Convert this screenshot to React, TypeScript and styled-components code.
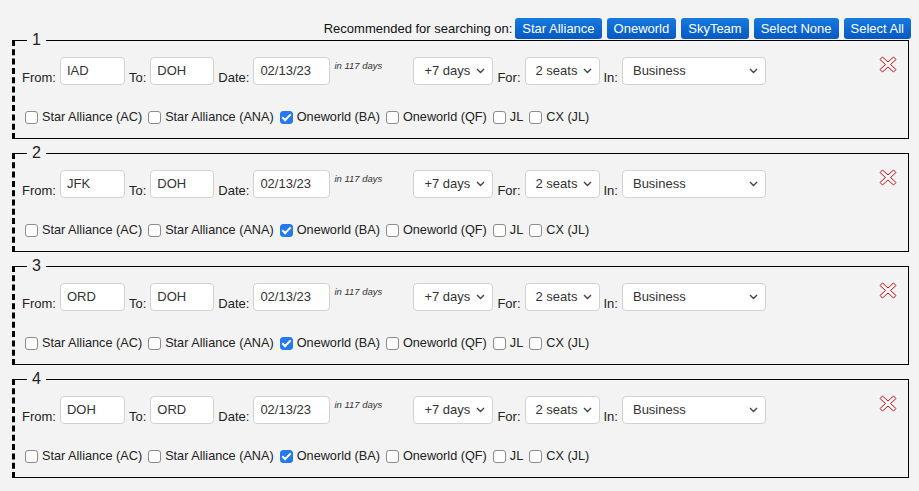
import React from 'react';
import styled, { createGlobalStyle } from 'styled-components';

const GlobalStyle = createGlobalStyle`
  body {
    margin: 8px;
    background: #f3f3f3;
    font-family: "Liberation Sans", Arial, sans-serif;
    font-size: 13px;
    color: #222;
  }
`;

const Toolbar = styled.div`
  display: flex;
  justify-content: flex-end;
  align-items: center;
  gap: 5px;
  margin-top: 10px;
  margin-bottom: -8px;
  height: 21px;
`;

const ToolbarText = styled.span`
  margin-right: -2px;
  font-size: 13px;
  color: #111;
`;

const PresetButton = styled.button`
  height: 21px;
  padding: 0 7px;
  border: none;
  border-radius: 3px;
  background: linear-gradient(#1679de, #0659c1);
  color: #fff;
  font-family: inherit;
  font-size: 13px;
  line-height: 21px;
  cursor: pointer;
`;

const Leg = styled.fieldset`
  margin: 0 2px 5px 4px;
  padding: 8px 11px 13px 7px;
  border: 1px solid #000;
  border-left: 3px dashed #000;
  background: transparent;
`;

const LegNumber = styled.legend`
  margin-left: 5px;
  padding: 0 5px;
  font-size: 16px;
  line-height: 18px;
  color: #222;
`;

const FieldRow = styled.div`
  display: flex;
  align-items: flex-end;
  gap: 4px;
  height: 28px;
`;

const FieldLabel = styled.span`
  line-height: 15px;
  font-size: 13px;
  color: #222;
`;

const TextBox = styled.input<{ $w: number }>`
  box-sizing: border-box;
  width: ${(p) => p.$w}px;
  height: 28px;
  margin: 0;
  padding: 0 6px 1px;
  border: 1px solid #d2d2d2;
  border-radius: 4px;
  background: #fff;
  font-family: inherit;
  font-size: 13px;
  color: #333;
  outline: none;
`;

const DaysNote = styled.span`
  align-self: flex-start;
  width: 75px;
  padding-top: 3px;
  font-size: 9.5px;
  font-style: italic;
  color: #333;
`;

const SelectWrap = styled.div<{ $w: number }>`
  position: relative;
  width: ${(p) => p.$w}px;
  height: 28px;
`;

const NativeSelect = styled.select`
  appearance: none;
  box-sizing: border-box;
  width: 100%;
  height: 28px;
  margin: 0;
  padding: 0 20px 1px 10px;
  border: 1px solid #d2d2d2;
  border-radius: 4px;
  background: #fff;
  font-family: inherit;
  font-size: 13px;
  color: #333;
  outline: none;
`;

const Chevron = styled.svg`
  position: absolute;
  right: 8px;
  top: 11px;
  pointer-events: none;
`;

const RemoveButton = styled.button`
  align-self: flex-start;
  margin: -1px 0 0 auto;
  padding: 0;
  border: none;
  background: none;
  cursor: pointer;
  line-height: 0;
`;

const CarrierRow = styled.div`
  display: flex;
  align-items: center;
  gap: 6px;
  margin-top: 24px;
  padding-left: 3px;
  line-height: 16px;
`;

const Carrier = styled.label`
  display: inline-flex;
  align-items: center;
  gap: 4px;
  font-size: 12.7px;
  color: #222;
`;

const Check = styled.input.attrs({ type: 'checkbox' })`
  appearance: none;
  position: relative;
  box-sizing: border-box;
  width: 13px;
  height: 13px;
  margin: 0;
  border: 1px solid #8c8c8c;
  border-radius: 3px;
  background: #fff;

  &:checked {
    background: #2479ee;
    border-color: #2479ee;
  }

  &:checked::after {
    content: '';
    position: absolute;
    left: 3.5px;
    top: 0.5px;
    width: 3px;
    height: 7px;
    border: solid #fff;
    border-width: 0 2px 2px 0;
    transform: rotate(45deg);
  }
`;

const legs = [
  { from: 'IAD', to: 'DOH' },
  { from: 'JFK', to: 'DOH' },
  { from: 'ORD', to: 'DOH' },
  { from: 'DOH', to: 'ORD' },
];

const carriers = [
  { name: 'Star Alliance (AC)', on: false },
  { name: 'Star Alliance (ANA)', on: false },
  { name: 'Oneworld (BA)', on: true },
  { name: 'Oneworld (QF)', on: false },
  { name: 'JL', on: false },
  { name: 'CX (JL)', on: false },
];

const presets = ['Star Alliance', 'Oneworld', 'SkyTeam', 'Select None', 'Select All'];

const Dropdown: React.FC<{ width: number; value: string; options: string[] }> = ({ width, value, options }) => (
  <SelectWrap $w={width}>
    <NativeSelect defaultValue={value}>
      {options.map((o) => (
        <option key={o}>{o}</option>
      ))}
    </NativeSelect>
    <Chevron width="9" height="6" viewBox="0 0 9 6">
      <polyline points="1,1 4.5,4.5 8,1" fill="none" stroke="#444" strokeWidth="1.4" />
    </Chevron>
  </SelectWrap>
);

const RemoveIcon = () => (
  <svg width="18" height="17" viewBox="0 0 18 17">
    <polygon
      points="1,3.5 3.5,1 9,6 14.5,1 17,3.5 11.5,8.5 17,13.5 14.5,16 9,11 3.5,16 1,13.5 6.5,8.5"
      fill="#fff6f6"
      stroke="#d0101a"
      strokeWidth="1"
      strokeLinejoin="miter"
    />
  </svg>
);

const App: React.FC = () => {
  return (
    <>
      <GlobalStyle />
      <Toolbar>
        <ToolbarText>Recommended for searching on:</ToolbarText>
        {presets.map((p) => (
          <PresetButton key={p}>{p}</PresetButton>
        ))}
      </Toolbar>
      {legs.map((leg, i) => (
        <Leg key={i}>
          <LegNumber>{i + 1}</LegNumber>
          <FieldRow>
            <FieldLabel>From:</FieldLabel>
            <TextBox $w={65} defaultValue={leg.from} />
            <FieldLabel>To:</FieldLabel>
            <TextBox $w={64} defaultValue={leg.to} />
            <FieldLabel>Date:</FieldLabel>
            <TextBox $w={77} defaultValue="02/13/23" />
            <DaysNote>in 117 days</DaysNote>
            <Dropdown width={80} value="+7 days" options={['+0 days', '+3 days', '+7 days', '+14 days']} />
            <FieldLabel>For:</FieldLabel>
            <Dropdown width={75} value="2 seats" options={['1 seat', '2 seats', '3 seats', '4 seats']} />
            <FieldLabel>In:</FieldLabel>
            <Dropdown width={144} value="Business" options={['Economy', 'Premium Economy', 'Business', 'First']} />
            <RemoveButton title="Remove">
              <RemoveIcon />
            </RemoveButton>
          </FieldRow>
          <CarrierRow>
            {carriers.map((c) => (
              <Carrier key={c.name}>
                <Check defaultChecked={c.on} />
                {c.name}
              </Carrier>
            ))}
          </CarrierRow>
        </Leg>
      ))}
    </>
  );
};

export default App;
